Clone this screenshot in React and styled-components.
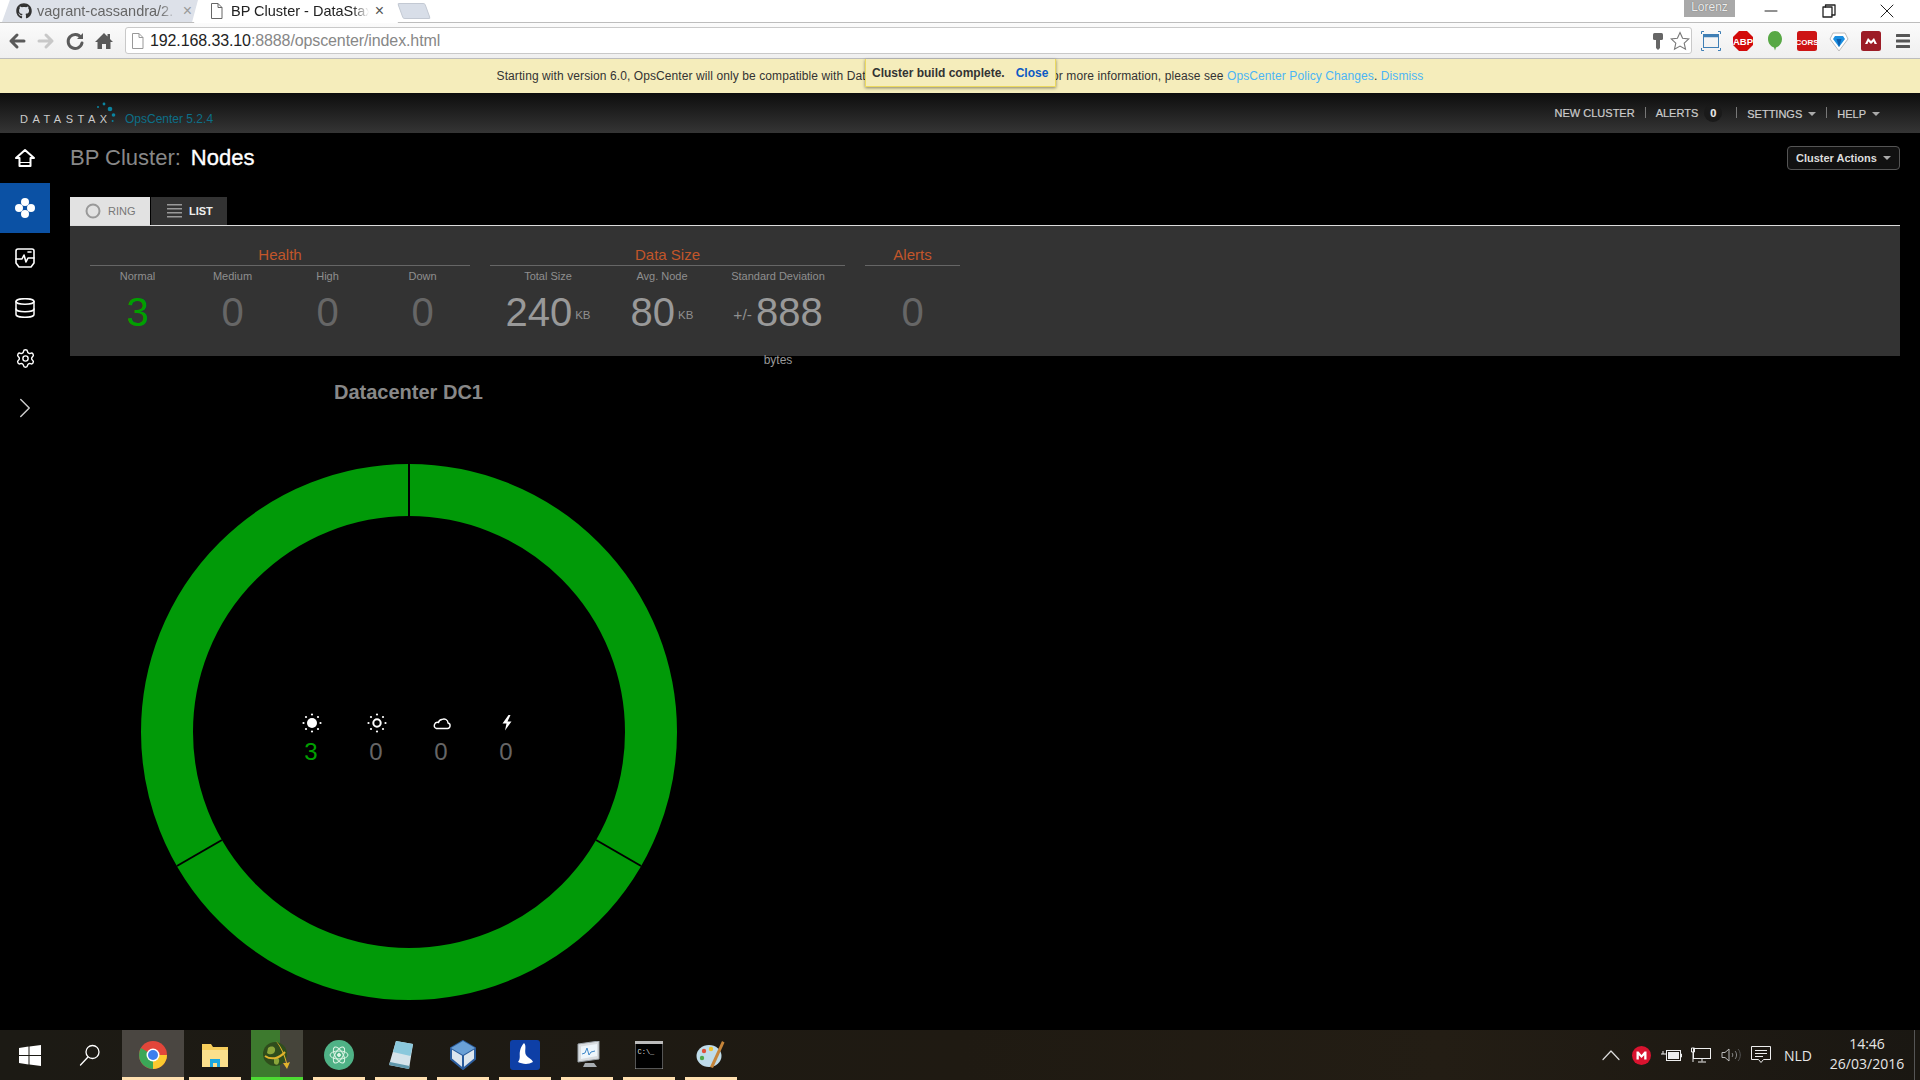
import React from "react";
import styled, { createGlobalStyle } from "styled-components";
import { FaGithub } from "react-icons/fa";
import { Settings, ChevronRight } from "lucide-react";

const Global = createGlobalStyle`
  html, body { margin: 0; padding: 0; background: #000; overflow: hidden; }
  #root { width: 1920px; height: 1080px; }
  * { box-sizing: border-box; }
`;
const SANS = `"Liberation Sans", Arial, sans-serif`;

const Page = styled.div`
  position: relative; width: 1920px; height: 1080px; display: flex; flex-direction: column;
  background: #000; font-family: ${SANS}; overflow: hidden;
`;
/* ---------- browser chrome ---------- */
const TabStrip = styled.div`
  position: relative; height: 23px; display: flex; padding-left: 2px; background: #fff; border-bottom: 1px solid #bdbdbd;
`;
const Tab = styled.div`
  position: relative; height: ${p => (p.$active ? 23 : 22)}px; width: ${p => (p.$active ? 204 : 196)}px;
  margin-left: ${p => (p.$active ? -4 : 0)}px; z-index: ${p => (p.$active ? 2 : 1)};
  display: flex; align-items: center; padding: 0 ${p => (p.$active ? 14 : 6)}px 1px ${p => (p.$active ? 16 : 14)}px;
  background: ${p => (p.$active ? "#fff" : "#dde1e9")};
  clip-path: ${p => (p.$active
    ? "polygon(0 100%, 4% 0, 96% 0, 100% 100%)"
    : "polygon(0 100%, 4% 0, 100% 0, 97% 100%)")};
`;
const TabTitle = styled.span`
  flex: 1; margin-left: ${p => p.$gap}px; font-size: 14.5px; white-space: nowrap; overflow: hidden;
  color: ${p => p.$color}; -webkit-mask-image: linear-gradient(90deg, #000 88%, transparent 100%);
  mask-image: linear-gradient(90deg, #000 88%, transparent 100%);
`;
const TabClose = styled.span`
  font-size: 16px; line-height: 1; color: ${p => p.$color}; margin-left: 6px;
`;
const NewTab = styled.div`
  width: 28px; height: 16px; margin: 3px 0 0 2px; background: #d8deE8; border-radius: 2px;
  transform: skewX(20deg); border: 1px solid #c3c9d3;
`;
const StripFill = styled.div`flex: 1;`;
const ProfileBadge = styled.div`
  position: absolute; left: 1684px; top: 0; width: 51px; height: 17px; background: #a9a9a9; color: #eee;
  font-size: 12px; text-align: center; line-height: 14px; z-index: 4; text-shadow: 0 0 1px #555;
`;
const WindowControls = styled.div`display: flex; height: 22px; align-items: center; margin-right: 4px;`;
const WindowButton = styled.div`width: 58px; display: flex; justify-content: center; align-items: center;`;

const Toolbar = styled.div`
  height: 36px; display: flex; align-items: center; padding: 0 1px 0 7px;
  background: linear-gradient(#fbfbfb, #efefef); border-bottom: 1px solid #bcbcbc;
`;
const NavIcons = styled.div`display: flex; gap: 9px; align-items: center;`;
const Omnibox = styled.div`
  flex: 1; height: 27px; margin: 0 3px 0 11px; background: #fff; border: 1px solid #c9c9c9; border-radius: 3px;
  display: flex; align-items: center; padding: 0 1px 0 5px; gap: 6px;
`;
const Url = styled.div`
  flex: 1; font-size: 16px; letter-spacing: -0.11px; color: #222; white-space: nowrap;
  span { color: #878787; }
`;
const ExtCell = styled.div`width: 32px; height: 26px; display: flex; align-items: center; justify-content: center;`;

const Banner = styled.div`
  height: 34px; background: #f5edbb; display: flex; align-items: center; justify-content: center;
  font-size: 12px; letter-spacing: 0.09px; color: #333; white-space: pre;
  a { color: #4cb5f5; text-decoration: none; }
`;
const Toast = styled.div`
  position: absolute; left: 865px; top: 59px; width: 191px; height: 28px; background: #f5edbb;
  border: 1px solid #ecd95f; border-top: 0; box-shadow: 0 1px 3px rgba(0,0,0,.45);
  display: flex; align-items: center; padding: 0 0 0 6px; font-size: 12px; font-weight: 700; color: #333; z-index: 5;
  a { color: #0b59c4; margin-left: 11px; }
`;
/* ---------- app header ---------- */
const AppHeader = styled.div`
  height: 40px; display: flex; align-items: center; justify-content: space-between; padding: 0 40px 0 20px;
  background: linear-gradient(#0d0d0d, #353535);
`;
const Brand = styled.div`position: relative; display: flex; align-items: center; gap: 18px; padding-top: 11px;`;
const BrandWord = styled.div`font-size: 11px; letter-spacing: 4.5px; color: #ccc; width: 87px; white-space: nowrap;`;
const BrandDots = styled.svg`position: absolute; left: 75px; top: 0;`;
const Version = styled.div`font-size: 12px; color: #0c6f88;`;
const HeaderNav = styled.div`
  display: flex; align-items: center; gap: 10px; font-size: 11px; color: #ccc; padding-bottom: 1px;
  -webkit-text-stroke: 0.2px #ccc;
`;
const HeaderSep = styled.div`width: 1px; height: 11px; background: #777;`;
const NavLink = styled.div`
  display: flex; align-items: center; gap: 6px; margin-top: ${p => (p.$low ? 2 : 0)}px;
`;
const Caret = styled.i`
  display: block; width: 0; height: 0; border: 4px solid transparent; border-top-color: #aaa; border-bottom: 0;
`;
const CountBadge = styled.div`
  width: 18px; height: 18px; border-radius: 50%; background: #1a1a1a; color: #eee; font-weight: 700; font-size: 11px;
  display: flex; align-items: center; justify-content: center; margin: 0 4px 0 0;
`;
/* ---------- body ---------- */
const Body = styled.div`flex: 1; display: flex; min-height: 0;`;
const Side = styled.nav`width: 50px; flex: none; display: flex; flex-direction: column;`;
const SideItem = styled.div`
  height: 50px; display: flex; align-items: center; justify-content: center;
  background: ${p => (p.$active ? "#0b51a4" : "transparent")};
`;
const Main = styled.main`flex: 1; padding: 0 20px; min-width: 0;`;
const TitleRow = styled.div`height: 64px; padding-top: 13px; display: flex; justify-content: space-between; align-items: flex-start;`;
const Title = styled.h1`
  margin: 0; font-size: 22px; line-height: 24px; font-weight: 400; color: #888;
  b { color: #fff; font-weight: 400; margin-left: 10px; -webkit-text-stroke: 0.35px #fff; }
`;
const ActionButton = styled.div`
  width: 113px; height: 24px; border: 1px solid #555; border-radius: 4px; background: #111; color: #ddd;
  font-size: 11px; font-weight: 700; display: flex; align-items: center; padding-left: 8px; gap: 6px;
`;
const ViewTabs = styled.div`display: flex; height: 29px; border-bottom: 1px solid #dcdcdc;`;
const ViewTab = styled.div`
  height: 28px; width: ${p => p.$w}px; margin-left: ${p => p.$ml || 0}px;
  background: ${p => (p.$on ? "#e2e2e2" : "#333")}; color: ${p => (p.$on ? "#777" : "#eee")};
  font-size: 11px; font-weight: ${p => (p.$on ? 400 : 700)}; display: flex; align-items: center;
  padding-left: ${p => (p.$on ? 15 : 16)}px; gap: 7px;
`;
const Panel = styled.section`height: 130px; background: #333; padding-left: 20px; display: flex; gap: 20px;`;
const Group = styled.div`width: ${p => p.$w}px; flex: none;`;
const GroupTitle = styled.div`
  height: 40px; border-bottom: 1px solid #666; display: flex; align-items: flex-end; justify-content: center;
  padding-bottom: 1px; font-size: 15px; line-height: 18px; color: #c2562a;
`;
const Cols = styled.div`display: grid; grid-template-columns: ${p => p.$cols}; text-align: center;`;
const StatLabel = styled.div`margin-top: 3px; font-size: 11px; line-height: 14px; color: #8f8f8f; white-space: nowrap;`;
const StatValue = styled.div`
  margin-top: 6px; font-size: 40px; line-height: 46px; white-space: nowrap;
  color: ${p => p.$c || "#666"};
`;
const Unit = styled.span`font-size: 11.5px; color: #8f8f8f; margin-left: 3px; vertical-align: 7px;`;
const PlusMinus = styled.span`font-size: 15.5px; color: #8f8f8f; margin-right: 4px; vertical-align: 6px;`;
const UnderNote = styled.div`margin-top: 15px; font-size: 12px; line-height: 14px; color: #999;`;
const Datacenter = styled.section`width: 677px;`;
const DcTitle = styled.h2`margin: 24px 0 60px; font-size: 20px; line-height: 24px; font-weight: 700; color: #888; text-align: center;`;
const RingWrap = styled.div`
  width: 536px; height: 536px; margin: 0 auto; display: grid; place-items: center;
  & > * { grid-area: 1 / 1; }
`;
const RingStats = styled.div`display: grid; grid-template-columns: repeat(4, 65px); margin: 15px 0 0 2px;`;
const RingStat = styled.div`display: flex; flex-direction: column; align-items: center; gap: 5px;`;
const RingNum = styled.div`
  font-size: 24px; line-height: 28px; color: ${p => p.$c || "#666"}; margin-right: 2px;
`;
/* ---------- taskbar ---------- */
const Taskbar = styled.footer`
  height: 50px; flex: none; display: flex; align-items: stretch; color: #e6e6e6;
  background: linear-gradient(90deg, #1c1a14, #1f1a12 50%, #231d14 75%, #1a1712);
`;
const StartCell = styled.div`width: 60px; flex: none; display: flex; align-items: center; justify-content: center;`;
const Tile = styled.div`
  width: 62px; flex: none; position: relative; display: flex; align-items: center; justify-content: center;
  margin-left: ${p => (p.$wide ? 2 : 0)}px;
  &::before {
    content: ""; position: absolute; top: 0; bottom: 0; left: ${p => (p.$wide ? 0 : 5)}px; right: ${p => (p.$wide ? 0 : 5)}px;
    background: ${p => p.$bg || "transparent"};
  }
  &::after {
    content: ""; position: absolute; height: 3px; bottom: 0; left: ${p => (p.$wide ? 0 : 5)}px; right: ${p => (p.$wide ? 0 : 5)}px;
    background: ${p => p.$bar || "#ffe0b0"};
  }
  svg { position: relative; }
`;
const Tray = styled.div`margin-left: auto; display: flex; align-items: center;`;
const TrayCell = styled.div`width: 30px; display: flex; justify-content: center;`;
const Lang = styled.div`width: 44px; text-align: center; font: 14px "Open Sans", sans-serif;`;
const Clock = styled.div`
  width: 94px; height: 50px; text-align: center; font: 14px/20px "Open Sans", sans-serif; padding-top: 4px;
`;
const TrayEnd = styled.div`width: 6px; height: 50px; border-left: 1px solid #555;`;

/* ---------- drawings ---------- */
const Stroke = ({ w = 20, h = 20, c = "#fff", sw = 2, children, vb }) => (
  <svg width={w} height={h} viewBox={vb || `0 0 ${w} ${h}`} fill="none" stroke={c} strokeWidth={sw} strokeLinecap="round" strokeLinejoin="round">{children}</svg>
);
const PageGlyph = ({ c = "#666" }) => (
  <svg width="13" height="16" viewBox="0 0 13 16" fill="#fff" stroke={c}><path d="M1.5 .5h6.5l4 4v11h-10.500z" /><path d="M8 .5v4h4" fill="none" /></svg>
);
const Back = () => <Stroke w={20} h={20} c="#5a5a5a" sw={3}><path d="M17 10H4M10 4l-6 6 6 6" /></Stroke>;
const Forward = () => <Stroke w={20} h={20} c="#c8c8c8" sw={3}><path d="M3 10h13M10 4l6 6-6 6" /></Stroke>;
const Reload = () => (
  <Stroke w={20} h={20} c="#5a5a5a" sw={3}>
    <path d="M16 6.500A7 7 0 1 0 17 12" /><path d="M18 2v6h-6z" fill="#5a5a5a" stroke="none" />
  </Stroke>
);
const HomeSolid = () => (
  <svg width="20" height="20" viewBox="0 0 20 20" fill="#5a5a5a"><path d="M10 2 1 11h2.500v7h4.500v-5h4v5h4.500v-7h2.500l-3-3V3h-2.500v2.500z" /></svg>
);
const KeyIcon = () => (
  <svg width="12" height="18" viewBox="0 0 12 18" fill="#666"><rect x="1" y="1" width="10" height="7" rx="1.500" /><path d="M4 8h4v8l-2 2-2-2z" /></svg>
);
const StarIcon = () => (
  <svg width="20" height="20" viewBox="0 0 20 20" fill="#fff" stroke="#777" strokeWidth="1.100"><path d="M10 1.500l2.600 5.700 6.200.7-4.600 4.200 1.300 6.100L10 15.100l-5.500 3.100 1.300-6.100L1.200 7.900l6.200-.7z" /></svg>
);
const CaptureIcon = () => (
  <svg width="20" height="20" viewBox="0 0 20 20" fill="none" stroke="#3f7fb5"><rect x="2.500" y="3.500" width="15" height="13" /><path d="M3 5h14" strokeWidth="2.500" /><path d="M.5 3V.5H3M17 .5h2.500V3M.5 17v2.500H3M17 19.500h2.500V17" /></svg>
);
const AbpIcon = () => (
  <svg width="20" height="20" viewBox="0 0 20 20"><path d="M6 0h8l6 6v8l-6 6H6l-6-6V6z" fill="#d30a0a" /><text x="10" y="13.800" textAnchor="middle" fontFamily={SANS} fontSize="9.500" fontWeight="700" fill="#fff">ABP</text></svg>
);
const BalloonIcon = () => (
  <svg width="16" height="22" viewBox="0 0 16 22" fill="#58a845"><path d="M8 1c4 0 7 3.500 7 8s-3 7.500-6 8.500l-1 3-1-3C4 16.500 1 13.500 1 9s3-8 7-8z" /></svg>
);
const CorsIcon = () => (
  <svg width="20" height="20" viewBox="0 0 20 20"><rect width="20" height="20" rx="2.500" fill="#cd1414" /><text x="10" y="13.800" textAnchor="middle" fontFamily={SANS} fontSize="8" fontWeight="700" fill="#fff">CORS</text></svg>
);
const GemIcon = () => (
  <svg width="20" height="22" viewBox="0 0 20 22"><path d="M10 21 1 9l3-6h12l3 6z" fill="#fff" stroke="#bbb" /><path d="M10 17 4 9l2-3h8l2 3z" fill="#1b8fe0" /><path d="M10 17 7.500 9h5z" fill="#0b5fae" /></svg>
);
const MendeleyIcon = () => (
  <svg width="20" height="20" viewBox="0 0 20 20"><rect width="20" height="20" rx="2.500" fill="#9c1c26" /><path d="M4 13l3-6 3 3 3-3 3 6h-2.500l-.8-2.500L10 13l-2.700-2.500L6.500 13z" fill="#fff" /></svg>
);
const MenuIcon = () => (
  <svg width="14" height="14" viewBox="0 0 14 14" fill="#555"><rect y="0" width="14" height="3" rx=".5" /><rect y="5.500" width="14" height="3" rx=".5" /><rect y="11" width="14" height="3" rx=".5" /></svg>
);

const Dots = () => (
  <BrandDots width="24" height="26" viewBox="0 0 24 26" fill="#0b84a0">
    <circle cx="3" cy="6" r="1" /><circle cx="9" cy="3" r="1.400" /><circle cx="15" cy="8" r="2.300" /><circle cx="18.500" cy="14" r="1.800" /><circle cx="17.600" cy="20" r="1" />
  </BrandDots>
);

const HomeOutline = () => <Stroke w={22} h={20} sw={2}><path d="M11 2 2 10h3.500v8h11v-8H20z" /><path d="M5.500 14.500h11" strokeWidth="1" /></Stroke>;
const NodesIcon = () => (
  <svg width="22" height="22" viewBox="0 0 22 22" fill="#fff"><circle cx="11" cy="5" r="4" /><circle cx="11" cy="17" r="4" /><circle cx="5" cy="11" r="4" /><circle cx="17" cy="11" r="4" /></svg>
);
const ActivityIcon = () => (
  <Stroke w={20} h={20} sw={1.600}>
    <path d="M3 1h14a2 2 0 0 1 2 2v12l-3 4H4l-3-4V3a2 2 0 0 1 2-2z" />
    <path d="M1 11h6l2-4 2 7 2-4h6" /><path d="M13 4h3" />
  </Stroke>
);
const DbIcon = () => (
  <Stroke w={20} h={20} sw={1.500}>
    <ellipse cx="10" cy="3.500" rx="9" ry="2.800" /><path d="M1 3.500v13c0 1.500 4 2.800 9 2.800s9-1.300 9-2.800v-13" /><path d="M1 11c0 1.500 4 2.800 9 2.800s9-1.300 9-2.800" />
  </Stroke>
);
const RingGlyph = () => <svg width="16" height="16" viewBox="0 0 16 16" fill="none" stroke="#999" strokeWidth="2"><circle cx="8" cy="8" r="6.500" /></svg>;
const ListGlyph = () => (
  <svg width="15" height="14" viewBox="0 0 15 14" fill="#999"><rect width="15" height="1.500" /><rect y="4" width="15" height="1.500" /><rect y="8" width="15" height="1.500" /><rect y="12" width="15" height="1.500" /></svg>
);
const SunRays = () => (
  <g fill="#fff">
    <circle cx="10" cy="1.500" r="1.100" /><circle cx="10" cy="18.500" r="1.100" /><circle cx="1.500" cy="10" r="1.100" /><circle cx="18.500" cy="10" r="1.100" />
    <circle cx="4" cy="4" r="1.100" /><circle cx="16" cy="4" r="1.100" /><circle cx="4" cy="16" r="1.100" /><circle cx="16" cy="16" r="1.100" />
  </g>
);
const SunFull = () => <svg width="20" height="20" viewBox="0 0 20 20"><SunRays /><circle cx="10" cy="10" r="5" fill="#fff" /></svg>;
const SunRing = () => <svg width="20" height="20" viewBox="0 0 20 20"><SunRays /><circle cx="10" cy="10" r="3.700" fill="none" stroke="#fff" strokeWidth="2" /></svg>;
const Cloud = () => <Stroke w={20} h={20} sw={1.400}><path d="M4.500 15.500h11a2.800 2.800 0 0 0 .5-5.500 4 4 0 0 0-6-3.500 4 4 0 0 0-3.500 3 3 3 0 0 0-2 6z" /></Stroke>;
const Bolt = () => <svg width="20" height="20" viewBox="0 0 20 20" fill="#fff"><path d="M11.500 2 5.500 10.500H9.500L8 17.500l6.500-9H10.500L13.500 2z" /></svg>;

const WinLogo = () => <svg width="22" height="21" viewBox="0 0 22 21" fill="#fff"><path d="M0 3 9.500 1.600V10H0zM10.500 1.500 22 0v10H10.500zM0 11h9.500v8.400L0 18zM10.500 11H22v10l-11.500-1.600z" /></svg>;
const SearchIcon = () => <Stroke w={22} h={22} sw={1.300}><circle cx="13.500" cy="8" r="6.500" /><path d="M9 13 1.500 21" /></Stroke>;
const ChromeIcon = () => (
  <svg width="28" height="28" viewBox="0 0 28 28">
    <circle cx="14" cy="14" r="14" fill="#e2463a" />
    <path d="M14 14 1.900 7A14 14 0 0 0 14 28l6.900-12z" fill="#3ba757" />
    <path d="M14 14h14A14 14 0 0 1 14 28z" fill="#fbc92f" />
    <circle cx="14" cy="14" r="6.500" fill="#fff" /><circle cx="14" cy="14" r="5" fill="#3d7fee" />
  </svg>
);
const FolderIcon = () => (
  <svg width="28" height="26" viewBox="0 0 28 26"><path d="M1 2h9l2 3h15v20H1z" fill="#f6cd5b" /><path d="M1 8h26v17H1z" fill="#fbe08c" /><path d="M9 17h10v8h-3v-4h-4v4H9z" fill="#1ba8e0" /></svg>
);
const GlobeArrow = () => (
  <svg width="30" height="30" viewBox="0 0 30 30"><circle cx="13" cy="14" r="12" fill="#2f4d1c" /><path d="M6 8c4-3 8-1 7 3s-6 4-8 2zM12 18c3-1 6 0 5 4s-4 3-5 1z" fill="#8aa63a" /><path d="M14 1c6 6 9 14 11 22l3-1-3 7-4-6 3 0C22 15 19 8 14 1z" fill="#e2b32c" /><path d="M3 16c6 4 14 3 20-4" fill="none" stroke="#e2b32c" strokeWidth="2" /></svg>
);
const AtomIcon = () => (
  <svg width="30" height="30" viewBox="0 0 30 30" fill="none" stroke="#dff5e6" strokeWidth="1"><circle cx="15" cy="15" r="15" fill="#4fb286" stroke="none" /><ellipse cx="15" cy="15" rx="9" ry="4" transform="rotate(60 15 15)" /><ellipse cx="15" cy="15" rx="9" ry="4" transform="rotate(-60 15 15)" /><ellipse cx="15" cy="15" rx="9" ry="4" /><circle cx="15" cy="15" r="1.500" fill="#dff5e6" /></svg>
);
const NoteIcon = () => (
  <svg width="28" height="30" viewBox="0 0 28 30"><path d="M9 1 26 4 22 29 2 25z" fill="#d5e3ea" /><path d="M9 1 26 4 23.500 16 6 12z" fill="#8bc8dc" /><path d="M2 25l20 4 .6-3L3 22z" fill="#5f97ab" /></svg>
);
const CubeIcon = () => (
  <svg width="26" height="30" viewBox="0 0 26 30"><path d="M13 1 25 8v11L13 29 1 19V8z" fill="#dde6ee" stroke="#2b5c9c" strokeWidth="2" /><path d="M1 8l12 7 12-7M13 15v14" fill="none" stroke="#2b5c9c" strokeWidth="2" /><path d="M13 15 25 8 13 1 1 8z" fill="#6aa0d6" /></svg>
);
const WhaleIcon = () => (
  <svg width="30" height="30" viewBox="0 0 30 30"><rect width="30" height="30" rx="3" fill="#0e3fa6" /><path d="M14 3c3 3 0 8 2 12 2 3 6 4 7 7-5 3-11 2-15 0 3-4 1-7 2-11 .5-3 2-6 4-8z" fill="#fff" /></svg>
);
const MonitorIcon = () => (
  <svg width="30" height="28" viewBox="0 0 30 28"><path d="M6 3 27 0v18L6 21z" fill="#d9dde0" stroke="#9aa2a8" /><path d="M9 5.500 25 3v12L9 18z" fill="#eef6fb" /><path d="M10 13l3-1 2-5 2 7 2-3 4-1" fill="none" stroke="#3c86c8" strokeWidth="1" /><path d="M13 22h9l3 4H11z" fill="#a8adb1" /></svg>
);
const CmdIcon = () => (
  <svg width="28" height="28" viewBox="0 0 28 28"><rect width="28" height="28" fill="#000" stroke="#aaa" /><rect width="28" height="3" fill="#bbb" /><text x="2.500" y="13" fontFamily={`"Liberation Mono", monospace`} fontSize="7" fill="#ddd">C:\_</text></svg>
);
const PaletteIcon = () => (
  <svg width="30" height="30" viewBox="0 0 30 30"><ellipse cx="13" cy="16" rx="12.500" ry="11" fill="#bfdcea" /><circle cx="8" cy="11" r="2.200" fill="#e0503a" /><circle cx="15" cy="9" r="2.200" fill="#f1c42d" /><circle cx="6" cy="18" r="2.200" fill="#4fa84a" /><path d="M26 1l2.500 1.500L17 28l-3-1z" fill="#c6853a" /></svg>
);

const Tiles = [
  { icon: <ChromeIcon />, $bg: "#4a4641", $wide: true },
  { icon: <FolderIcon /> },
  { icon: <GlobeArrow />, $bg: "linear-gradient(90deg,#3d7a2e 55%,#45443a 55%)", $bar: "#4ddb33" },
  { icon: <AtomIcon /> },
  { icon: <NoteIcon /> },
  { icon: <CubeIcon /> },
  { icon: <WhaleIcon /> },
  { icon: <MonitorIcon /> },
  { icon: <CmdIcon /> },
  { icon: <PaletteIcon /> },
];

const Ring = () => {
  const R0 = 216, R1 = 268;
  const sep = [0, 120, 240].map(a => {
    const r = (a * Math.PI) / 180;
    return { x1: R0 * Math.sin(r), y1: -R0 * Math.cos(r), x2: R1 * Math.sin(r), y2: -R1 * Math.cos(r) };
  });
  return (
    <svg width="536" height="536" viewBox="-268 -268 536 536">
      <circle r="242" fill="none" stroke="#019a08" strokeWidth="52" />
      {sep.map((s, i) => <line key={i} {...s} stroke="#000" strokeWidth="2" />)}
    </svg>
  );
};

export default function App() {
  return (
    <Page>
      <Global />
      <TabStrip>
        <Tab>
          <FaGithub size={16} color="#333" />
          <TabTitle $gap={5} $color="#666">vagrant-cassandra/2.</TabTitle>
          <TabClose $color="#999">×</TabClose>
        </Tab>
        <Tab $active>
          <PageGlyph />
          <TabTitle $gap={8} $color="#222">BP Cluster - DataStax</TabTitle>
          <TabClose $color="#555">×</TabClose>
        </Tab>
        <NewTab />
        <StripFill />
        <WindowControls>
          <WindowButton><Stroke w={14} h={14} c="#222" sw={1}><path d="M1 7h12" /></Stroke></WindowButton>
          <WindowButton><Stroke w={14} h={14} c="#222" sw={1.300}><rect x="1" y="3" width="9" height="10" /><path d="M3.500 3V1H13v10h-3" /></Stroke></WindowButton>
          <WindowButton><Stroke w={14} h={14} c="#222" sw={1}><path d="M1 1l12 12M13 1 1 13" /></Stroke></WindowButton>
        </WindowControls>
      </TabStrip>
      <ProfileBadge>Lorenz</ProfileBadge>
      <Toolbar>
        <NavIcons><Back /><Forward /><Reload /><HomeSolid /></NavIcons>
        <Omnibox>
          <PageGlyph c="#999" />
          <Url>192.168.33.10<span>:8888/opscenter/index.html</span></Url>
          <KeyIcon />
          <StarIcon />
        </Omnibox>
        <ExtCell><CaptureIcon /></ExtCell>
        <ExtCell><AbpIcon /></ExtCell>
        <ExtCell><BalloonIcon /></ExtCell>
        <ExtCell><CorsIcon /></ExtCell>
        <ExtCell><GemIcon /></ExtCell>
        <ExtCell><MendeleyIcon /></ExtCell>
        <ExtCell><MenuIcon /></ExtCell>
      </Toolbar>
      <Banner>
        Starting with version 6.0, OpsCenter will only be compatible with DataStax Enterprise (DSE) clusters. For more information, please see <a>OpsCenter Policy Changes</a>. <a>Dismiss</a>
      </Banner>
      <Toast>Cluster build complete.<a>Close</a></Toast>
      <AppHeader>
        <Brand>
          <BrandWord>DATASTAX</BrandWord>
          <Dots />
          <Version>OpsCenter 5.2.4</Version>
        </Brand>
        <HeaderNav>
          <NavLink>NEW CLUSTER</NavLink>
          <HeaderSep />
          <NavLink>ALERTS<CountBadge>0</CountBadge></NavLink>
          <HeaderSep />
          <NavLink $low>SETTINGS<Caret /></NavLink>
          <HeaderSep />
          <NavLink $low>HELP<Caret /></NavLink>
        </HeaderNav>
      </AppHeader>
      <Body>
        <Side>
          <SideItem><HomeOutline /></SideItem>
          <SideItem $active><NodesIcon /></SideItem>
          <SideItem><ActivityIcon /></SideItem>
          <SideItem><DbIcon /></SideItem>
          <SideItem><Settings size={21} color="#fff" strokeWidth={1.600} /></SideItem>
          <SideItem><ChevronRight size={34} color="#ccc" strokeWidth={1} /></SideItem>
        </Side>
        <Main>
          <TitleRow>
            <Title>BP Cluster:<b>Nodes</b></Title>
            <ActionButton>Cluster Actions<Caret /></ActionButton>
          </TitleRow>
          <ViewTabs>
            <ViewTab $on $w={80}><RingGlyph />RING</ViewTab>
            <ViewTab $w={76} $ml={1}><ListGlyph />LIST</ViewTab>
          </ViewTabs>
          <Panel>
            <Group $w={380}>
              <GroupTitle>Health</GroupTitle>
              <Cols $cols="repeat(4, 95px)">
                <div><StatLabel>Normal</StatLabel><StatValue $c="#00a000">3</StatValue></div>
                <div><StatLabel>Medium</StatLabel><StatValue>0</StatValue></div>
                <div><StatLabel>High</StatLabel><StatValue>0</StatValue></div>
                <div><StatLabel>Down</StatLabel><StatValue>0</StatValue></div>
              </Cols>
            </Group>
            <Group $w={355}>
              <GroupTitle>Data Size</GroupTitle>
              <Cols $cols="116px 112px 120px">
                <div><StatLabel>Total Size</StatLabel><StatValue $c="#999">240<Unit>KB</Unit></StatValue></div>
                <div><StatLabel>Avg. Node</StatLabel><StatValue $c="#999">80<Unit>KB</Unit></StatValue></div>
                <div>
                  <StatLabel>Standard Deviation</StatLabel>
                  <StatValue $c="#999"><PlusMinus>+/-</PlusMinus>888</StatValue>
                  <UnderNote>bytes</UnderNote>
                </div>
              </Cols>
            </Group>
            <Group $w={95}>
              <GroupTitle>Alerts</GroupTitle>
              <Cols $cols="95px">
                <div><StatLabel>&nbsp;</StatLabel><StatValue>0</StatValue></div>
              </Cols>
            </Group>
          </Panel>
          <Datacenter>
            <DcTitle>Datacenter DC1</DcTitle>
            <RingWrap>
              <Ring />
              <RingStats>
                <RingStat><SunFull /><RingNum $c="#00a000">3</RingNum></RingStat>
                <RingStat><SunRing /><RingNum>0</RingNum></RingStat>
                <RingStat><Cloud /><RingNum>0</RingNum></RingStat>
                <RingStat><Bolt /><RingNum>0</RingNum></RingStat>
              </RingStats>
            </RingWrap>
          </Datacenter>
        </Main>
      </Body>
      <Taskbar>
        <StartCell><WinLogo /></StartCell>
        <StartCell><SearchIcon /></StartCell>
        {Tiles.map(({ icon, ...rest }, i) => <Tile key={i} {...rest}>{icon}</Tile>)}
        <Tray>
          <TrayCell><Stroke w={18} h={12} c="#ddd" sw={1.200}><path d="M1 10.500 9 2l8 8.500" /></Stroke></TrayCell>
          <TrayCell>
            <svg width="19" height="19" viewBox="0 0 19 19"><circle cx="9.500" cy="9.500" r="9.500" fill="#d9132f" /><path d="M4.500 13.500v-8h2l3 3.500 3-3.500h2v8h-2.300V9.300L9.500 12 6.800 9.300v4.200z" fill="#fff" /></svg>
          </TrayCell>
          <TrayCell>
            <svg width="21" height="14" viewBox="0 0 21 14" fill="none" stroke="#eee"><rect x="5.500" y="2.500" width="14" height="10" /><rect x="7" y="4" width="11" height="7" fill="#eee" stroke="none" /><path d="M19.500 6h1v3h-1M0 6h5M2 3v3" /></svg>
          </TrayCell>
          <TrayCell>
            <svg width="20" height="16" viewBox="0 0 20 16" fill="none" stroke="#eee"><rect x="2.500" y="1.500" width="17" height="10" /><path d="M11 11.500v3M7 15h8M.5 1h3v4h-3zM2 5v10" /></svg>
          </TrayCell>
          <TrayCell>
            <svg width="20" height="16" viewBox="0 0 20 16" fill="none" stroke="#bbb"><path d="M1 5.500h3L8 2v12l-4-3.500H1z" /><path d="M11 6c1 1 1 3 0 4M14 4c2 2 2 6 0 8" stroke="#888" /><path d="M17 2c3 3 3 9 0 12" stroke="#555" /></svg>
          </TrayCell>
          <TrayCell>
            <svg width="20" height="18" viewBox="0 0 20 18" fill="none" stroke="#eee"><path d="M.5.500h19v13h-7l-2.500 3-2.500-3h-7z" /><path d="M4 4.500h12M4 7.500h12M4 10.500h8" /></svg>
          </TrayCell>
          <Lang>NLD</Lang>
          <Clock>14:46<br />26/03/2016</Clock>
          <TrayEnd />
        </Tray>
      </Taskbar>
    </Page>
  );
}
